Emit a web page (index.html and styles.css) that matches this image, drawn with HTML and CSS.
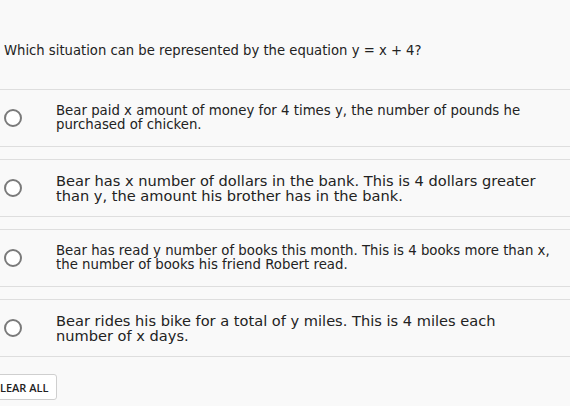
FILE: index.html
```html
<!DOCTYPE html>
<html>
<head>
<meta charset="utf-8">
<link rel="stylesheet" href="styles.css">
</head>
<body>
<div class="page">
  <p class="question">Which situation can be represented by the equation y = x + 4?</p>
  <div class="options">
    <div class="option">
      <span class="radio"></span>
      <span class="text small">Bear paid x amount of money for 4 times y, the number of pounds he purchased of chicken.</span>
    </div>
    <div class="option">
      <span class="radio"></span>
      <span class="text">Bear has x number of dollars in the bank. This is 4 dollars greater than y, the amount his brother has in the bank.</span>
    </div>
    <div class="option">
      <span class="radio"></span>
      <span class="text small">Bear has read y number of books this month. This is 4 books more than x, the number of books his friend Robert read.</span>
    </div>
    <div class="option">
      <span class="radio"></span>
      <span class="text">Bear rides his bike for a total of y miles. This is 4 miles each number of x days.</span>
    </div>
  </div>
  <button class="clear">CLEAR ALL</button>
</div>
</body>
</html>
```
FILE: styles.css
```css
html, body {
  margin: 0;
  padding: 0;
  background: #f9f9f9;
}
.page {
  font-family: "DejaVu Sans", Verdana, sans-serif;
  color: #222;
  overflow: hidden;
  height: 406px;
}
.question {
  margin: 0;
  padding: 43px 0 0 4px;
  height: 89px;
  box-sizing: border-box;
  font-size: 13.2px;
  line-height: 16px;
}
.options {
  display: flex;
  flex-direction: column;
  gap: 12px;
}
.option {
  display: flex;
  align-items: center;
  height: 58px;
  box-sizing: border-box;
  border-top: 1px solid #dedede;
  border-bottom: 1px solid #dedede;
}
.radio {
  flex: 0 0 auto;
  width: 14px;
  height: 14px;
  border: 2px solid #7a7a7a;
  border-radius: 50%;
  margin: 0 34px 0 4px;
  background: #fff;
}
.text {
  flex: 1;
  font-size: 14.6px;
  line-height: 15px;
  padding-right: 16px;
}
.text.small {
  font-size: 13.3px;
  line-height: 14.5px;
}
.clear {
  display: block;
  margin: 17px 0 0 -20px;
  height: 26px;
  padding: 0 8px 0 12px;
  font-family: "Open Sans", "Lato", sans-serif;
  font-weight: 600;
  font-size: 11px;
  color: #222;
  background: #fff;
  border: 1px solid #cfcfcf;
  border-radius: 3px;
}
```
